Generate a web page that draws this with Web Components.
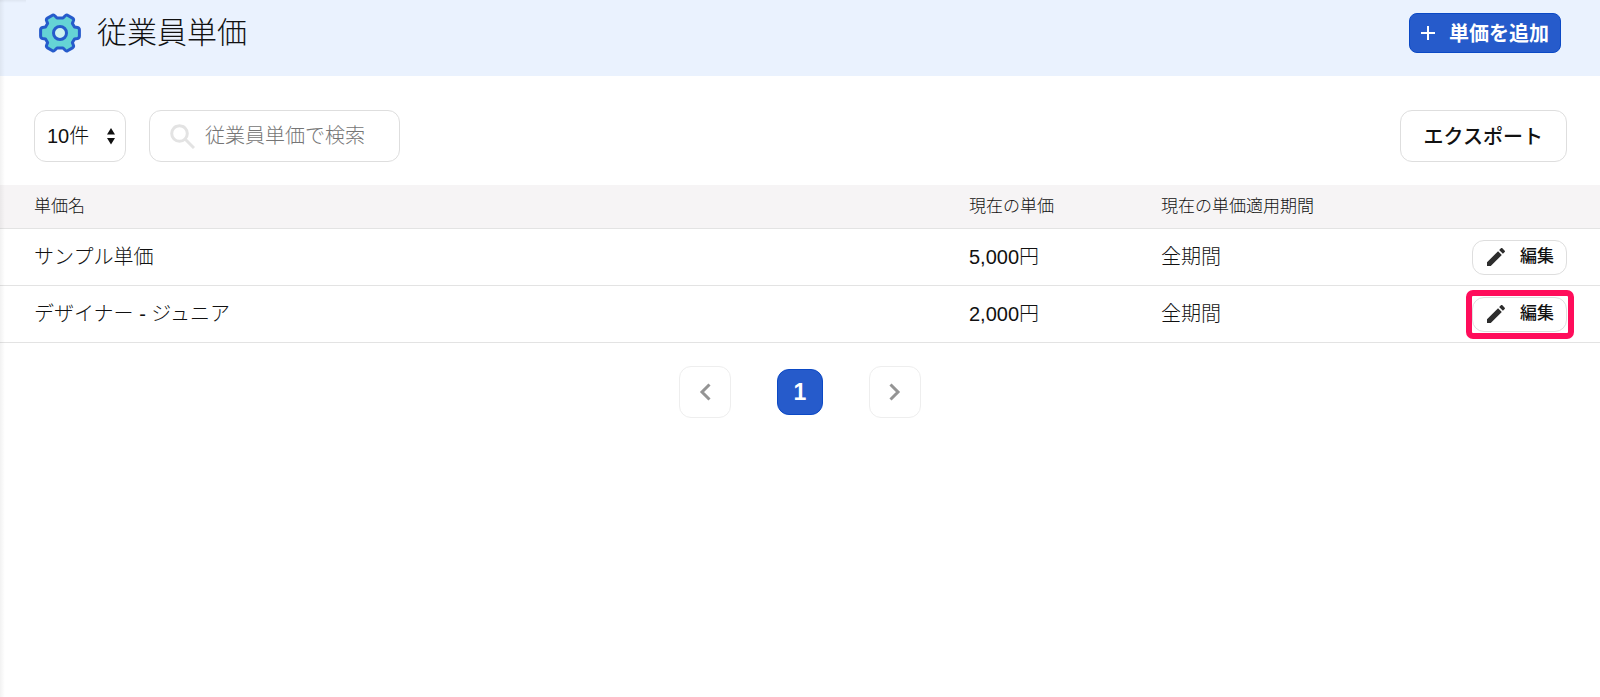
<!DOCTYPE html>
<html lang="ja">
<head>
<meta charset="utf-8">
<title>従業員単価</title>
<style>
  body {
    margin: 0;
    background: white;
    color: #111;
    font-family: "Liberation Sans", "Noto Sans CJK JP", sans-serif;
    font-size: 20px;
    font-weight: 300;
  }
</style>
</head>
<body>
<rate-page>
  <page-header slot="header" heading="従業員単価">
    <app-button variant="primary">
      <svg slot="icon" width="14" height="14" viewBox="0 0 14 14" fill="none" stroke="currentColor" stroke-width="2"><path d="M7 0v14M0 7h14"/></svg>
      単価を追加
    </app-button>
  </page-header>
  <list-toolbar slot="toolbar">
    <page-size></page-size>
    <search-box placeholder="従業員単価で検索"></search-box>
    <app-button slot="end" variant="outline">エクスポート</app-button>
  </list-toolbar>
  <rate-table></rate-table>
  <page-nav></page-nav>
</rate-page>

<script>
class RatePage extends HTMLElement {
  connectedCallback() {
    this.attachShadow({ mode: 'open' });
    this.shadowRoot.innerHTML = `
      <style>
        :host {
          display: block;
          position: relative;
          min-height: 100vh;
          overflow: hidden;
        }
        .edge {
          position: absolute;
          top: 0;
          bottom: 0;
          left: 0;
          width: 5px;
          background: linear-gradient(to right, rgba(0,0,0,0.05), rgba(0,0,0,0));
          pointer-events: none;
        }
        .corner {
          position: absolute;
          top: 0;
          left: 0;
          width: 26px;
          height: 3px;
          background: linear-gradient(to bottom, rgba(0,0,0,0.05), rgba(0,0,0,0));
          pointer-events: none;
        }
      </style>
      <slot name="header"></slot>
      <main>
        <slot name="toolbar"></slot>
        <slot></slot>
      </main>
      <div class="edge"></div>
      <div class="corner"></div>
    `;
  }
}
customElements.define('rate-page', RatePage);

class PageHeader extends HTMLElement {
  connectedCallback() {
    this.attachShadow({ mode: 'open' });
    this.shadowRoot.innerHTML = `
      <style>
        :host { display: block; }
        header {
          display: flex;
          align-items: center;
          justify-content: space-between;
          padding: 10px 39px 20px;
          background: #eaf2fe;
        }
        .title {
          display: flex;
          align-items: center;
          gap: 16px;
        }
        h1 {
          margin: 0;
          font-size: 30px;
          font-weight: 300;
          line-height: 46px;
        }
        svg { display: block; }
      </style>
      <header>
        <div class="title">
          <svg width="42" height="40" viewBox="0 0 42 40">
            <path d="M35.500 14L38.500 14.500Q40.400 15 40.400 17V23Q40.400 25 38.500 25.500L35.500 26L33.400 29.600L34.500 32.500Q35 34 33.500 34.900L28.500 37.800Q27 38.400 26 37L24 35H18L16 37Q15 38.400 13.500 37.800L8.500 34.900Q7 34 7.500 32.500L8.600 29.600L6.500 26L3.500 25.500Q1.600 25 1.600 23V17Q1.600 15 3.500 14.500L6.500 14L8.600 10.400L7.500 7.500Q7 6 8.500 5.100L13.500 2.200Q15 1.600 16 3L18 5H24L26 3Q27 1.600 28.500 2.200L33.500 5.100Q35 6 34.500 7.500L33.400 10.400Z" fill="#65d3d5" stroke="#265bcb" stroke-width="3" stroke-linejoin="round"/>
            <circle cx="21" cy="20" r="6.500" fill="#cdf1f0" stroke="#265bcb" stroke-width="3"/>
          </svg>
          <h1>${this.getAttribute('heading')}</h1>
        </div>
        <slot></slot>
      </header>
    `;
  }
}
customElements.define('page-header', PageHeader);

class AppButton extends HTMLElement {
  connectedCallback() {
    this.attachShadow({ mode: 'open' });
    this.shadowRoot.innerHTML = `
      <style>
        :host { display: block; flex: none; }
        button {
          display: flex;
          align-items: center;
          justify-content: center;
          box-sizing: border-box;
          width: 100%;
          margin: 0;
          border: 1px solid #dedede;
          border-radius: 12px;
          background: white;
          color: #111;
          font: inherit;
          font-weight: 500;
          white-space: nowrap;
          cursor: pointer;
        }
        :host([variant="outline"]) button {
          height: 52px;
          padding: 0 23px 2px;
        }
        :host([variant="primary"]) button {
          height: 40px;
          padding: 0 11px;
          gap: 14px;
          border-color: #0b49c5;
          border-radius: 8px;
          background: #265bcb;
          color: white;
          font-weight: 700;
        }
        :host([variant="primary"]) .label { padding-bottom: 2px; }
        :host([variant="small"]) button {
          height: 35px;
          padding: 0 12px 0 11px;
          gap: 12px;
          font-size: 17px;
        }
      </style>
      <button type="button"><slot name="icon"></slot><span class="label"><slot></slot></span></button>
    `;
  }
}
customElements.define('app-button', AppButton);

class ListToolbar extends HTMLElement {
  connectedCallback() {
    this.attachShadow({ mode: 'open' });
    this.shadowRoot.innerHTML = `
      <style>
        :host {
          display: flex;
          justify-content: space-between;
          padding: 34px 33px 23px 34px;
        }
        .start {
          display: flex;
          gap: 23px;
        }
      </style>
      <div class="start"><slot></slot></div>
      <slot name="end"></slot>
    `;
  }
}
customElements.define('list-toolbar', ListToolbar);

class PageSize extends HTMLElement {
  connectedCallback() {
    this.attachShadow({ mode: 'open' });
    this.shadowRoot.innerHTML = `
      <style>
        :host { display: block; }
        .box {
          display: grid;
          align-items: center;
        }
        select, svg { grid-area: 1 / 1; }
        select {
          appearance: none;
          box-sizing: border-box;
          width: 92px;
          height: 52px;
          margin: 0;
          padding: 0 24px 0 12px;
          border: 1px solid #dedede;
          border-radius: 12px;
          background: white;
          color: #111;
          font: inherit;
        }
        svg {
          justify-self: end;
          margin-right: 11px;
          pointer-events: none;
        }
      </style>
      <div class="box">
        <select aria-label="表示件数">
          <option>10件</option>
          <option>20件</option>
          <option>50件</option>
        </select>
        <svg width="8" height="18" viewBox="0 0 8 18" fill="#111"><path d="M4 1l4 6.500H0zM4 17.500L0 11h8z"/></svg>
      </div>
    `;
  }
}
customElements.define('page-size', PageSize);

class SearchBox extends HTMLElement {
  connectedCallback() {
    this.attachShadow({ mode: 'open' });
    this.shadowRoot.innerHTML = `
      <style>
        :host { display: block; }
        label {
          display: flex;
          align-items: center;
          gap: 10px;
          box-sizing: border-box;
          width: 251px;
          height: 52px;
          padding: 0 20px;
          border: 1px solid #dedede;
          border-radius: 12px;
          background: white;
        }
        svg { flex: none; }
        input {
          flex: 1;
          min-width: 0;
          padding: 0;
          border: 0;
          outline: 0;
          background: none;
          color: #111;
          font: inherit;
        }
        input::placeholder { color: #757575; opacity: 1; }
      </style>
      <label>
        <svg width="25" height="25" viewBox="0 0 25 25" fill="none" stroke="#e3e3e3" stroke-width="3"><circle cx="9.500" cy="9.500" r="7.800"/><path d="M15 15l9 9"/></svg>
        <input type="text" aria-label="検索" placeholder="${this.getAttribute('placeholder')}">
      </label>
    `;
  }
}
customElements.define('search-box', SearchBox);

const rates = [
  { name: 'サンプル単価', price: '5,000円', period: '全期間' },
  { name: 'デザイナー - ジュニア', price: '2,000円', period: '全期間', marked: true }
];

class RateTable extends HTMLElement {
  connectedCallback() {
    this.attachShadow({ mode: 'open' });
    this.shadowRoot.innerHTML = `
      <style>
        :host { display: block; }
        table {
          width: 100%;
          table-layout: fixed;
          border-collapse: separate;
          border-spacing: 0;
        }
        .price { width: 192px; }
        .period { width: 264px; }
        .action { width: 175px; }
        th, td {
          padding: 0;
          border-bottom: 1px solid #e3e3e3;
          text-align: left;
          font-weight: 300;
        }
        th {
          height: 43px;
          background: #f6f4f5;
          font-size: 17px;
          line-height: 24px;
        }
        td {
          height: 56px;
          line-height: 28px;
        }
        th:first-child, td:first-child { padding-left: 34px; }
        td:last-child { padding-right: 33px; }
        .cell {
          display: flex;
          justify-content: flex-end;
        }
        app-button { position: relative; width: 95px; }
        /* frame round the highlighted action */
        .marked::after {
          content: "";
          position: absolute;
          inset: -7px -7px -7px -6px;
          border: 6px solid #ff0d5b;
          border-radius: 7px;
          box-sizing: border-box;
          pointer-events: none;
        }
      </style>
      <table>
        <colgroup><col><col class="price"><col class="period"><col class="action"></colgroup>
        <thead>
          <tr><th>単価名</th><th>現在の単価</th><th>現在の単価適用期間</th><th></th></tr>
        </thead>
        <tbody>
          ${rates.map(rate => `
            <tr>
              <td>${rate.name}</td>
              <td>${rate.price}</td>
              <td>${rate.period}</td>
              <td><div class="cell">
                <app-button variant="small" class="${rate.marked ? 'marked' : ''}">
                  <svg slot="icon" width="26" height="26" viewBox="0 0 24 24" fill="#2d2d2d"><path d="M3 17.250V21h3.750L17.810 9.940l-3.750-3.750L3 17.250zM20.710 7.040c.39-.39.39-1.020 0-1.410l-2.340-2.340c-.39-.39-1.020-.39-1.410 0l-1.830 1.830 3.750 3.750 1.830-1.830z"/></svg>
                  編集
                </app-button>
              </div></td>
            </tr>
          `).join('')}
        </tbody>
      </table>
    `;
  }
}
customElements.define('rate-table', RateTable);

class PageNav extends HTMLElement {
  connectedCallback() {
    this.attachShadow({ mode: 'open' });
    this.shadowRoot.innerHTML = `
      <style>
        :host { display: block; }
        nav {
          display: flex;
          align-items: center;
          justify-content: center;
          gap: 46px;
          padding: 23px 0;
        }
        button {
          display: flex;
          align-items: center;
          justify-content: center;
          box-sizing: border-box;
          width: 52px;
          height: 52px;
          margin: 0;
          padding: 0;
          border: 1px solid #eee;
          border-radius: 12px;
          background: white;
          color: #949494;
          font: inherit;
        }
        .current {
          width: 46px;
          height: 46px;
          border-color: #0b49c5;
          background: #265bcb;
          color: white;
          font-size: 23px;
          font-weight: 700;
        }
      </style>
      <nav aria-label="ページ">
        <button type="button" aria-label="前へ" disabled>
          <svg width="12" height="18" viewBox="0 0 12 18" fill="none" stroke="currentColor" stroke-width="3"><path d="M10.500 1.500L3 9l7.500 7.500"/></svg>
        </button>
        <button type="button" class="current" aria-current="page">1</button>
        <button type="button" aria-label="次へ" disabled>
          <svg width="12" height="18" viewBox="0 0 12 18" fill="none" stroke="currentColor" stroke-width="3"><path d="M1.500 1.500L9 9l-7.500 7.500"/></svg>
        </button>
      </nav>
    `;
  }
}
customElements.define('page-nav', PageNav);
</script>
</body>
</html>
